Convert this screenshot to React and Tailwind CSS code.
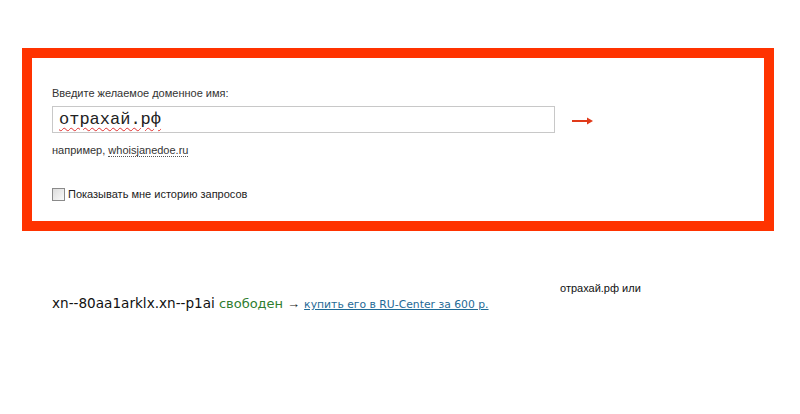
export default function App() {
  return (
    <div className="w-[800px] h-[414px] bg-white font-['Liberation_Sans',Tahoma,sans-serif] text-black">
      <div className="pt-[48px] pl-[22px]">
        {/* Search form */}
        <div className="w-[752px] h-[183px] border-[10px] border-[#ff3300] bg-white pl-[20px] pt-[28px]">
          <div className="text-[11px] leading-[14px] text-[#333]">Введите желаемое доменное имя:</div>
          <div className="mt-[6px] flex items-center">
            <div className="w-[503px] h-[27px] border border-[#c8c8c8] flex items-center pl-[6px]">
              <span className="font-['Liberation_Mono',monospace] text-[17px] text-[#222] underline decoration-wavy decoration-[#e03030] decoration-1 underline-offset-[3px]">
                отрахай.рф
              </span>
            </div>
            <svg className="ml-[17px] mt-[2px]" width="22" height="10" viewBox="0 0 22 10">
              <line x1="0" y1="5" x2="19" y2="5" stroke="#e03a1a" strokeWidth="2" />
              <path d="M15 1.5 L21 5 L15 8.5 Z" fill="#e03a1a" />
            </svg>
          </div>
          <div className="mt-[10px] text-[11px] leading-[14px] text-[#333]">
            например, <span className="border-b border-dotted border-[#555]">whoisjanedoe.ru</span>
          </div>
          <label className="mt-[29px] flex items-center gap-[3px] text-[11px] text-[#222]">
            <span className="w-[13px] h-[13px] border border-[#8a8a8a] bg-gradient-to-br from-[#dcdcdc] to-[#fafafa] inline-block" />
            Показывать мне историю запросов
          </label>
        </div>
      </div>

      {/* Result */}
      <div className="relative">
        <div className="absolute left-[560px] top-[49px] text-[11px] text-[#111]">отрахай.рф или</div>
        <div className="pt-[62px] pl-[52px] flex items-baseline font-['DejaVu_Sans',Verdana,sans-serif]">
          <span className="text-[13.6px] text-[#111]">xn--80aa1arklx.xn--p1ai</span>
          <span className="ml-[4px] text-[13px] text-[#2f7d2f]">свободен</span>
          <span className="ml-[4px] font-['Liberation_Sans',sans-serif] text-[13px] text-[#222]">→</span>
          <a href="#" className="ml-[4px] text-[10.8px] text-[#1f6a96] underline">купить его в RU-Center за 600 р.</a>
        </div>
      </div>
    </div>
  );
}
